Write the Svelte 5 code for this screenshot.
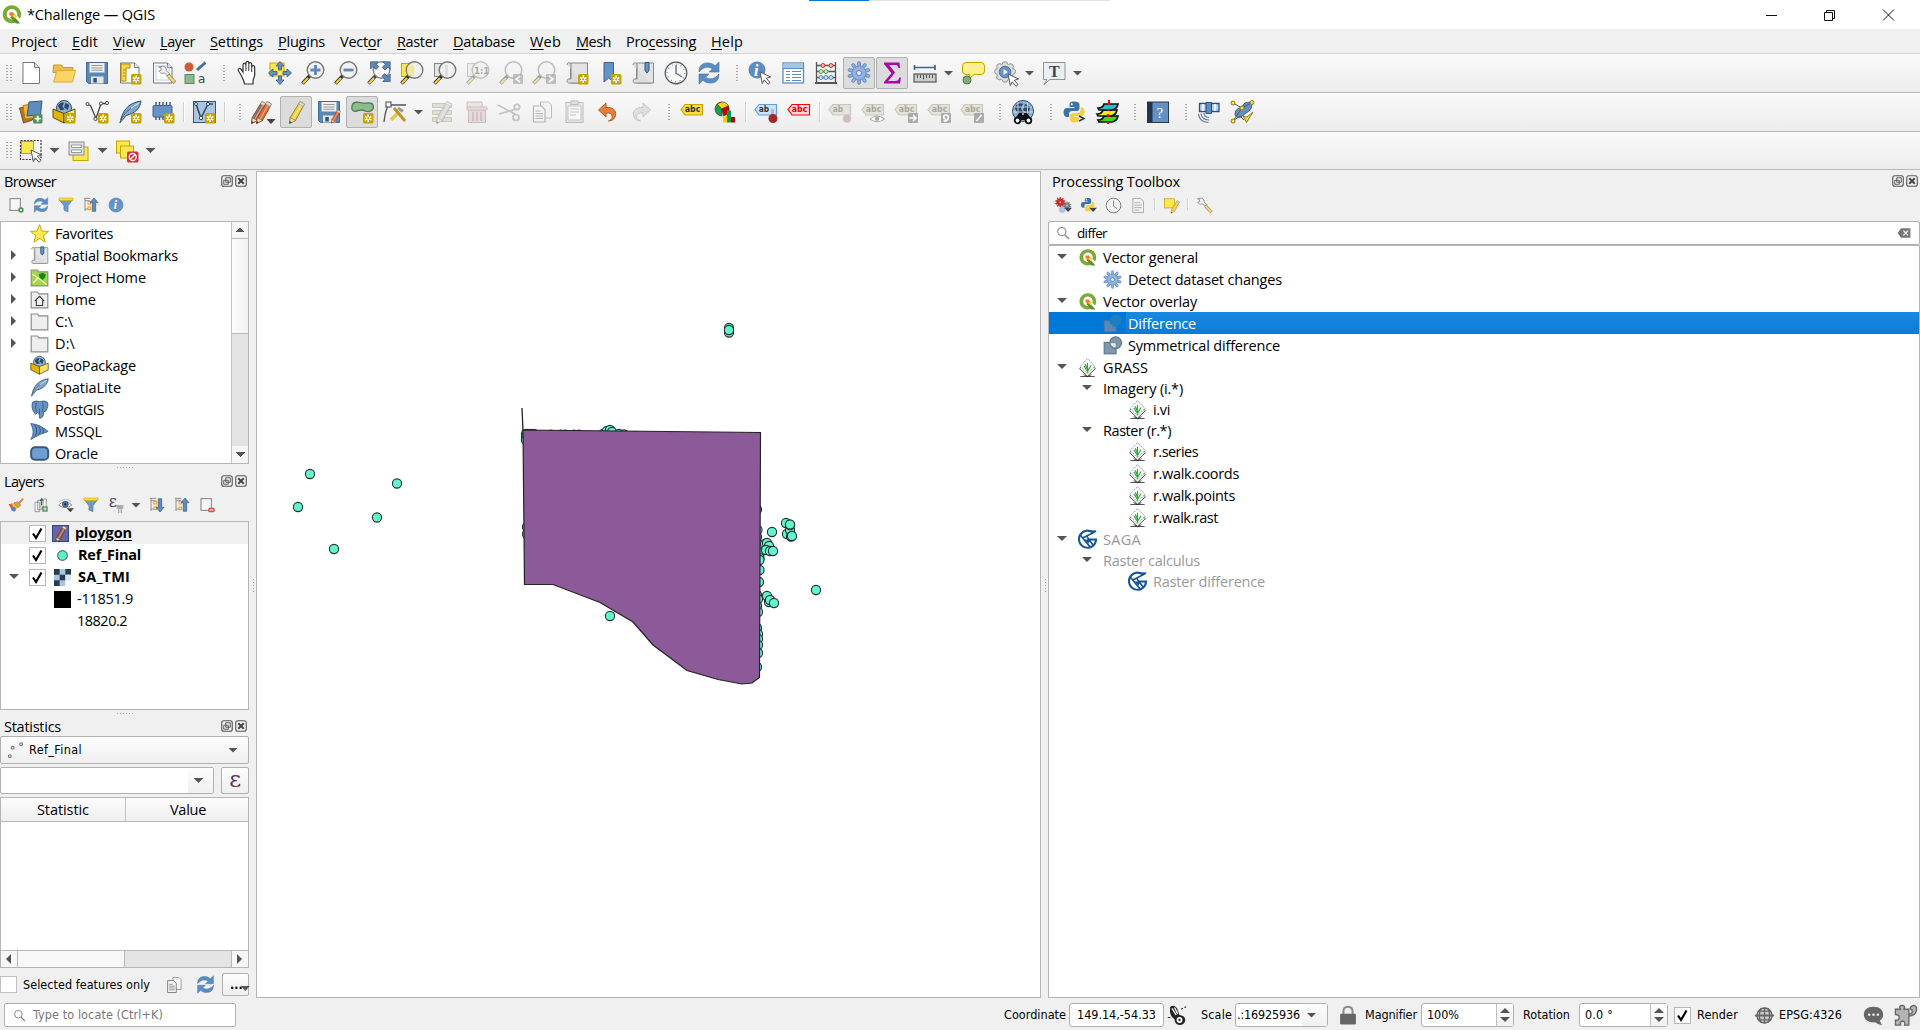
<script>
  // Spreads the letters of a label so that it takes exactly `width` pixels.
  function fit(node, width) {
    if (!width) return;
    const w = node.getBoundingClientRect().width;
    node.style.letterSpacing = (width - w) / node.textContent.length + 'px';
  }

  const menus = [
    ['Pro', 'j', 'ect', 46], ['', 'E', 'dit', 26], ['', 'V', 'iew', 32], ['', 'L', 'ayer', 35],
    ['', 'S', 'ettings', 53], ['', 'P', 'lugins', 47], ['Vect', 'o', 'r', 42], ['', 'R', 'aster', 41],
    ['', 'D', 'atabase', 62], ['', 'W', 'eb', 31], ['', 'M', 'esh', 35], ['Pro', 'c', 'essing', 70], ['', 'H', 'elp', 32]
  ];

  // Shared pieces of the icons
  const star = '<rect x="13" y="13" width="10.500" height="10.500" rx="1.500" fill="#c9a200"/><path d="M18.200 14.600v7.400M15 16.500l6.400 3.700M21.400 16.500L15 20.200" stroke="#fff" stroke-width="1.500"/><circle cx="18.200" cy="18.300" r="1.100" fill="#c9a200"/>';
  const plus = '<rect x="14" y="14" width="9.500" height="9.500" rx="1.500" fill="#4f8f5c"/><path d="M18.700 15.700v6M15.700 18.700h6" stroke="#fff" stroke-width="1.800"/>';
  const cursor = '<path d="M12 11l10.500 5-4.200 1.300 3.700 4.200-2 1.800-3.700-4.500-2 3.700z" fill="#fff" stroke="#555" stroke-width="1"/>';
  const lens = (x = '', g = '#f1f1ee') => `<path d="M9 14.500L1.500 22.500" stroke="#333" stroke-width="3.600"/><path d="M7 17L2 22.300" stroke="#f3c73b" stroke-width="2.200"/><circle cx="14.500" cy="9" r="8.300" fill="${g}" fill-opacity=".85" stroke="#777" stroke-width="1.400"/>${x}`;
  const page = '<path d="M2.500 2h14l4.500 4.500V22h-18.500z" fill="#fff" stroke="#777"/><path d="M16.500 2v4.500h4.500" fill="#eee" stroke="#777"/>';
  const disk = '<path d="M1.500 1.500h21v21h-19l-2-2z" fill="#5b87b5" stroke="#42688f"/><rect x="4.500" y="2" width="15" height="9.500" fill="#eee"/><path d="M6.500 4.500h11M6.500 7h11M6.500 9.300h11" stroke="#999" stroke-width="1.100"/><path d="M6 15.500h12.500v7H6z" fill="#e4e4e4"/><rect x="8.300" y="17" width="3.500" height="4.500" fill="#33527a"/>';
  const qgis = '<path d="M12.500 1.500a10.300 10.300 0 1 0 4.500 19.400l-3.200-3.400a6 6 0 1 1 4.400-4l3.500 3.400A10.400 10.400 0 0 0 12.500 1.500z" fill="#7aab34"/><path d="M13.500 12.500l8.500 9.700h-5l-6.500-7z" fill="#578f2e"/><path d="M9.500 9.500h4.200l2.800 3.300-2.500 2.700-4.500-3z" fill="#ee7b2f"/><path d="M13 13.500l3-2 2.500 3-2.500 2.200z" fill="#f3dc4a"/>';
  const gear = (f, s) => {
    let o = '';
    for (let i = 0; i < 10; i++) o += `<rect x="10.600" y=".8" width="2.800" height="6" rx="1" fill="${f}" stroke="${s}" stroke-width=".8" transform="rotate(${i * 36} 12 12)"/>`;
    return `${o}<circle cx="12" cy="12" r="7" fill="${f}" stroke="${s}" stroke-width=".8"/><circle cx="12" cy="12" r="6.400" fill="${f}"/><circle cx="12" cy="12" r="2.500" fill="#e8eef8" stroke="${s}"/>`;
  };
  const tag = (fill, line, ink, text = 'abc') => `<path d="M1 9.500L5 4.500h17.500v10.500H5z" fill="${fill}" stroke="${line}" stroke-width="1.200"/><text x="4.800" y="12.400" font-size="8.300" font-weight="bold" font-family="DejaVu Sans" textLength="${text.length * 5.200}" lengthAdjust="spacingAndGlyphs" fill="${ink}">${text}</text>`;
  const gtag = (t) => tag('#e4e3da', '#c9c7bc', '#aaa89c', t);
  const refresh = '<path d="M2 11C2 4 6 1.500 12 2c3 .3 4.500 1.500 6 2.800L22 1v10h-10l3.500-3.200C11 4.800 6 6 2 11z" fill="#5a8dc6" stroke="#44719f" stroke-width=".6"/><path d="M22 13c0 7-4 9.500-10 9-3-.3-4.500-1.500-6-2.800L2 23V13h10l-3.500 3.200C13 19.200 18 18 22 13z" fill="#5a8dc6" stroke="#44719f" stroke-width=".6"/>';
  const python = '<path d="M12 1.500c-4 0-4.500 1.500-4.500 3V7h5v1H5C2.500 8 1.500 10 1.500 12.500S3 17 5 17h2v-3c0-2 1.500-3 3-3h5c1.500 0 2.500-1.200 2.500-2.700V4.500c0-2-2-3-5.500-3z" fill="#3b75a8"/><path d="M12.500 22.500c4 0 4.500-1.500 4.500-3V17h-5v-1h7.500c2.500 0 3.300-2 3.300-4.200S21.500 7.500 19.500 7.500h-1V10c0 2-1.500 3-3 3h-4c-2 0-3.500 1.200-3.500 3v3.500c0 2 1.500 3 4.500 3z" fill="#f7cf46"/><circle cx="9.800" cy="4.300" r="1" fill="#fff"/>';
  const globe = (x, y, r) => `<circle cx="${x}" cy="${y}" r="${r}" fill="#8fb1d6" stroke="#33506f"/><path d="M${x - r * 0.8} ${y - r * 0.3}q${r * 0.3} ${-r * 0.6} ${r * 0.8} ${-r * 0.4}l-${r * 0.2} ${r * 0.5} ${r * 0.3} ${r * 0.4}-${r * 0.6} ${r * 0.1}zM${x + r * 0.2} ${y - r * 0.7}l${r * 0.5} ${r * 0.3}-${r * 0.2} ${r * 0.7}-${r * 0.5}-${r * 0.4}z" fill="#2f4a68"/>`;
  const feather = '<path d="M2 23C4 12 9 3 23 1c-1 7-5 12-15 14.500z" fill="#7ea6d0" stroke="#33506f"/><path d="M2 23C6 14 12 8 21 3" stroke="#e8f1fa" fill="none"/><path d="M2 23C5 15 9 11 13 8.500" stroke="#33506f" fill="none"/>';
  const pencil = (c, d) => `<path d="M16 1.500l4.500 2.500-9 16.500-6 3 .8-6z" fill="${c}" stroke="${d}" stroke-width=".9"/><path d="M16 1.500l4.500 2.500-1.300 2.500-4.600-2.600z" fill="#ddd" stroke="#999" stroke-width=".7"/><path d="M17 5.500L8.500 20" stroke="#fff" stroke-opacity=".45" stroke-width="1.300"/><path d="M6.300 17.500l5.200 3-6 3z" fill="#f1dfc0" stroke="${d}" stroke-width=".7"/><path d="M5.500 23.500l.4-2.500 1.700 1.400z" fill="#333"/>`;
  const wrench = '<path d="M2 2.500l3 1v3l-2.500 1C4.500 11 7.500 10.500 9 9.500l4 4 2.500-2.500-4-4C12 4 9 1 6.500 1.500z" fill="#eee" stroke="#777"/><path d="M12 13.500l2.500-2.500 8 8.500c0 2-1.500 3-3 2.500z" fill="#ecd684" stroke="#8d7a3f"/>';
  const sheet = '<path d="M6 2h11l4 4v16H6z" fill="#f4f4f4" stroke="#999" stroke-width="1.300"/><path d="M8.500 8h8M8.500 11.500h10M8.500 15h10M8.500 18.500h7" stroke="#999" stroke-width="1.200"/>';
  const copy = '<path d="M10.500 2h8l3 3v13h-11z" fill="#f4f4f4" stroke="#888"/><path d="M3.500 6h8l3.500 3.500V22H3.500z" fill="#f6f6f6" stroke="#777" stroke-width="1.200"/><path d="M5.500 11h5M5.500 13.500h7.500M5.500 16h7.500M5.500 18.500h7.500" stroke="#777"/>';
  const tree = (up) => `<path d="M3 2v19M3 5.500h7M3 18h7" stroke="#888" fill="none" stroke-width="1.400"/><path d="M1.500 2H11" stroke="#888" stroke-width="1.400"/><rect x="7.500" y="6.500" width="4" height="4" fill="#fff" stroke="#ef9a2e" stroke-width="1.500"/><rect x="7.500" y="15" width="4" height="4" fill="#fff" stroke="#ef9a2e" stroke-width="1.500"/><path d="${up ? 'M16.500 1.500l6 7h-3.500v13h-5v-13h-3.500z' : 'M16.500 22.500l6-7h-3.500v-13h-5v13h-3.500z'}" fill="#5c8cc0" stroke="#33567d"/>`;
  const funnel = '<path d="M2 4h20l-7 9v9l-6-2.500V13z" fill="#6f9bc8" stroke="#4a76a3"/><rect x="1.500" y="1.500" width="21" height="4" fill="#f7dc45" stroke="#c9a200" stroke-width=".8"/>';
  const folder = (x = '', f = '#eee') => `<path d="M1.500 2.500h8l1.500 2.500h11.500v17.500h-21z" fill="${f}" stroke="#8b8b8b" stroke-width="1.500"/>${x}`;
  const box = '<path d="M1 9l11 4.500v9.500L1 17.500z" fill="#e2b500" stroke="#4d4100" stroke-width=".9"/><path d="M23 9l-11 4.500v9.500l11-5.500z" fill="#f9e468" stroke="#4d4100" stroke-width=".9"/>';
  const bookmark = '<path d="M5.500 2h17v20h-17z" fill="#e4e4e4" stroke="#888"/><path d="M2 4c0-3 4-3 4 0v14H3.500c-2 0-1.500 4 0 4H20" fill="#ddd" stroke="#888"/>';
  const clock = '<circle cx="12" cy="12" r="10.800" fill="#f8f8f8" stroke="#555" stroke-width="1.200"/><circle cx="12" cy="12" r="8.800" fill="none" stroke="#6f9bc8" stroke-width="1.300" stroke-dasharray="1 3.600"/><path d="M12 4v8l6 4" stroke="#777" stroke-width="1.500" fill="none"/>';
  const info = '<circle cx="12" cy="12" r="10.500" fill="#6693c5" stroke="#4f7cad"/><text x="8.700" y="18.500" font-size="18" font-style="italic" font-weight="bold" font-family="Liberation Serif" fill="#fff">i</text>';
  const saga = '<path d="M19.500 3.800A10.800 10.800 0 1 0 22.800 12H12" fill="none" stroke="#16559a" stroke-width="2.600"/><path d="M22.500 1.500L7.500 9.500M3 6.500L15 21M6.500 9.500L11 8l8 11" fill="none" stroke="#16559a" stroke-width="2"/><path d="M8 12h9l-4 5z" fill="#16559a"/><path d="M15 1.500h8" stroke="#16559a" stroke-width="2"/>';
  const grass = '<path d="M12 4L22 13.500 12 23 2 13.500z" fill="#fff" stroke="#222"/><path d="M12 1l9.500 9.500L12 20 2.500 10.500z" fill="#fff" stroke="#777" stroke-width="1" stroke-dasharray="2 1"/><path d="M7 21l5 2.500 5-2.500M3 23.400h18" stroke="#222" fill="none"/><path d="M12 18.500V6M12 17L7.500 10M12 17l4.500-7.500M12 14l-3-6" stroke="#36a63c" stroke-width="1.500" fill="none"/>';
  const badge = (p) => `<rect x="14" y="13" width="10" height="10" rx="1" fill="#aaa"/><path d="${p}" stroke="#fff" stroke-width="1.600" fill="none"/>`;

  const icons = {
    qgis, python, feather, saga, grass, funnel, refresh, clock, info, copy, gear: gear('#8fb2e4', '#5c83b8'),
    new: '<path d="M4 1.500h11.500l5 5V22.500H4z" fill="#fff" stroke="#777"/><path d="M15.500 1.500v5h5" fill="#ddd" stroke="#777"/>',
    open: '<path d="M1.500 4h8l1.500 2.500h10v5h-20z" fill="#e8bd4a" stroke="#c99a2a"/><path d="M5 9.500h18.500L20.500 21H1.500z" fill="#fcd462" stroke="#dcab35"/>',
    save: disk,
    layout: page + '<path d="M3 3h9v4H8v13H3z" fill="#f6d650" stroke="#b28d00"/><path d="M5 9h2M5 12h2M5 15h2" stroke="#b28d00"/>' + star,
    manager: page + '<rect x="5" y="5" width="13" height="14" fill="none" stroke="#b8c9ef"/><g transform="translate(6 4) scale(.82)">' + wrench + '</g>',
    style: '<circle cx="5" cy="6" r="4.500" fill="#cf5a33"/><path d="M13 9L21.500 1.500" stroke="#45709c" stroke-width="3"/><rect x="1" y="13.500" width="9" height="9" fill="#8fb78f" stroke="#5b8a5c"/><text x="14" y="22" font-size="12" font-family="DejaVu Sans" fill="#444">a</text>',
    pan: '<path d="M6 14L3.500 10c-1.200-2 1.200-3.600 2.700-1.600L8 11V4c0-2.200 2.900-2.200 2.900 0V2c0-2.200 2.900-2.200 2.900 0v1c.2-2 2.900-1.800 2.900.3V6c.3-2 3-1.800 3 .3V14c0 2.500-1.700 4-1.700 6v3H9.500c-.4-4-2-5.500-3.500-9z" fill="#fff" stroke="#333" stroke-width="1.200"/><path d="M10.900 4v6M13.800 3v7M16.700 6v5" stroke="#333" stroke-width="1"/>',
    pansel: '<rect x="2" y="2" width="14" height="13" fill="#fbe84f" stroke="#c9a200"/><path d="M12 .5l4 4.500h-2.500v4h-3V5H8zM12 23.500l4-4.500h-2.500v-4h-3v4H8zM.5 12L5 8v2.500h4v3H5V16zM23.500 12L19 8v2.500h-4v3h4V16z" fill="#6592c3" stroke="#33567d" stroke-width=".8"/>',
    zin: lens('<path d="M14.500 4v10M9.500 9h10" stroke="#5b87b9" stroke-width="2.800"/>'),
    zout: lens('<path d="M9.500 9h10" stroke="#5b87b9" stroke-width="2.800"/>'),
    zfull: '<g opacity=".9">' + lens('', '#fafafa') + '</g><path d="M3.500.800h7.500l-2.300 2 3 3-2.700 2.700-3-3-2.500 2.500zM23.200.800v7.500l-2.200-2.300-3 3-2.700-2.700 3-3-2.500-2.500zM23.200 20.500h-7.500l2.300-2.200-3-3 2.700-2.700 3 3 2.500-2.500z" fill="#5b87b9" stroke="#33567d" stroke-width=".7"/>',
    zsel: '<rect x="1.500" y="2.500" width="11" height="13" fill="#fbe84f" stroke="#c9a200"/>' + lens('<path d="M8 4.500h6.500v10.500h-6q-3-5-.5-10.500z" fill="#f0e68c" fill-opacity=".7"/>'),
    zlay: '<rect x="1.500" y="2.500" width="11" height="13" fill="#e4e4e4" stroke="#888"/>' + lens('<path d="M14 4v11" stroke="#ccc"/>'),
    znat: '<g opacity=".4"><rect x="1.500" y="2.500" width="11" height="13" fill="#e4e4e4" stroke="#888"/>' + lens('<text x="8" y="12.500" font-size="9.500" font-weight="bold" font-family="DejaVu Sans Condensed" fill="#333">1:1</text>') + '</g>',
    zprev: '<g opacity=".45">' + lens() + '</g><g opacity=".7">' + badge('M21 15l-4 3 4 3') + '</g>',
    znext: '<g opacity=".45">' + lens() + '</g><g opacity=".7">' + badge('M17 15l4 3-4 3') + '</g>',
    mapview: bookmark + star,
    bmnew: '<path d="M6 1.500h9.500V21L10.700 17 6 21z" fill="#6693c5" stroke="#3b638d"/>' + star,
    bmshow: bookmark + '<path d="M14 1.500h4v8l-2 2.500-2-2.500z" fill="#6693c5" stroke="#33567d"/>',
    identify: '<circle cx="9" cy="9" r="8.500" fill="#5f8cbf"/><text x="6" y="15" font-size="16" font-style="italic" font-weight="bold" font-family="Liberation Serif" fill="#fff">i</text>' + cursor,
    table: '<rect x="2" y="2" width="20.500" height="20" fill="#fff" stroke="#5c8cc0" stroke-width="1.300"/><path d="M2.500 5h19.500" stroke="#a9c5e4" stroke-width="5"/><path d="M2 7.500h20.500M5 10.500h4M11 10.500h9M5 13.500h4M11 13.500h9M5 16.500h4M11 16.500h9M5 19.500h4M11 19.500h9" stroke="#5c8cc0" stroke-width="1.200"/>',
    abacus: '<path d="M2.500 1v20M21.500 1v20M2.500 4.500h19M2.500 10.500h19M2.500 16.500h19" stroke="#555" stroke-width="1.300"/><path d="M1 22h22" stroke="#555" stroke-width="2"/><g fill="#f7b5a8" stroke="#c33"><circle cx="9" cy="4.500" r="2"/><circle cx="17" cy="4.500" r="2"/></g><g fill="#cfeac4" stroke="#5a9e50"><circle cx="7" cy="10.500" r="2"/><circle cx="12" cy="10.500" r="2"/></g><g fill="#cfe2f5" stroke="#4f86bd"><circle cx="7" cy="16.500" r="2"/><circle cx="12" cy="16.500" r="2"/><circle cx="17" cy="16.500" r="2"/></g>',
    sigma: '<path d="M4 1.500h15.500l.5 5.500h-1.500c-.6-2.500-1.500-3-4-3H9l6 7.500-6.800 8.500h7c2.500 0 3.500-1 4.300-3.500H21L20 22.500H4V21l7.500-8.800L4 3z" fill="#a808a8"/>',
    ruler: '<path d="M1.500 6.500h20.500M1.500 4v5M22 4v5" stroke="#3f648d" stroke-width="1.700"/><rect x="1" y="13" width="22" height="8" fill="#ccc" stroke="#555" stroke-width="1.200"/><path d="M4.500 13.500v3.500M7.500 13.500v3.500M10.500 13.500v5M13.500 13.500v3.500M16.500 13.500v3.500M19.500 13.500v3.500" stroke="#555"/>',
    tip: '<path d="M5 1.500h15q3.500 0 3.500 3.500v5q0 3.500-3.500 3.500H13L8 18l1-4.500H5Q1.500 13.500 1.500 10V5q0-3.500 3.500-3.500z" fill="#fbf08e" stroke="#c9a200"/><circle cx="6" cy="19" r="4" fill="#7eae7e" stroke="#4c7a4c"/>',
    action: '<g fill="#ddd" stroke="#888" stroke-width=".9"><circle cx="11" cy="3.500" r="2.800"/><circle cx="16.500" cy="5.500" r="2.800"/><circle cx="18.800" cy="10.500" r="2.800"/><circle cx="16.500" cy="16" r="2.800"/><circle cx="11" cy="18.500" r="2.800"/><circle cx="5.500" cy="16" r="2.800"/><circle cx="3.500" cy="10.500" r="2.800"/><circle cx="5.500" cy="5.500" r="2.800"/></g><circle cx="11" cy="11" r="8" fill="#ddd"/><circle cx="11" cy="11" r="5.800" fill="#6693c5" stroke="#4a76a3"/><path d="M9.500 8v6l4.500-3z" fill="#fff"/><g transform="translate(2 2)">' + cursor + '</g>',
    note: '<path d="M1.500 1.500h21.500v17H8L2 23.500l3-5H1.500z" fill="#e8f0f4" stroke="#8b9499"/><text x="7" y="15.500" font-size="16" font-weight="bold" font-family="Liberation Serif" fill="#444">T</text>',
    source: '<path d="M.5 8l11-2 2 14-9 3z" fill="#b9722c" stroke="#7d4d1d"/><path d="M4 5.500l12-2 1 14-11 1.500z" fill="#f1b83a" stroke="#a87b18"/><path d="M10 2l13-1-1.500 13.500L8 16z" fill="#5c8cc0" stroke="#33567d"/>' + plus,
    gpkg: globe(12, 8, 7.5) + box + star,
    geopackage: globe(12, 8, 7.5) + box,
    shp: '<path d="M2.500 4.500l3 1 5.500 13 5-15h6" fill="none" stroke="#444" stroke-width="1.300"/><g fill="#fff" stroke="#444"><circle cx="2.500" cy="4" r="1.600"/><circle cx="10.500" cy="19" r="1.600"/><circle cx="16" cy="3.500" r="1.600"/><circle cx="22" cy="3" r="1.600"/></g>' + star,
    splite: feather + star,
    memory: '<path d="M5 2v18M8.500 2v18M12 2v18M15.500 2v18M19 2v18" stroke="#33567d" stroke-width="1.400"/><rect x="2" y="5.500" width="19" height="11.500" rx="1" fill="#6693c5" stroke="#3b638d"/>' + star,
    virtual: '<rect x="1.500" y="1.500" width="22" height="21" fill="#aac4e2" stroke="#33567d"/><path d="M4 4l5 14 7-14h5" fill="none" stroke="#33475c" stroke-width="1.500"/><g fill="#fff" stroke="#33475c"><circle cx="4" cy="4" r="1.500"/><circle cx="9" cy="18" r="1.700"/><circle cx="16" cy="4" r="1.500"/></g>' + star,
    pencils: '<g transform="translate(-5 0)">' + pencil('#9c6a58', '#6e4a3c') + '</g>' + pencil('#de6a33', '#9c4418') + '<path d="M15.500 19h9l-4.500 5z" fill="#444"/>',
    pencil: pencil('#ecd445', '#8d7a22'),
    saveedit: disk + '<g transform="translate(11 9) scale(.6)">' + pencil('#de6a33', '#9c4418') + '</g>',
    addpoly: '<path d="M2 6c1-5 7-4 10-3 4 1 9-2 11 2 2 5-4 8-8 6-3-2-5-1-8 0C3 12 1 10 2 6z" fill="#8dbb8c" stroke="#4f7d52" stroke-width="1.300"/>' + star,
    vertex: '<path d="M1 22C2 13 3 8 6 5h17" fill="none" stroke="#555" stroke-width="1.300"/><rect x="3" y="2" width="5" height="5" fill="#fff" stroke="#444"/><path d="M8 20l8-8" stroke="#e6c94a" stroke-width="3.500"/><path d="M11 8l11 13" stroke="#c28f22" stroke-width="2.800"/><path d="M15 8l5 3.500" stroke="#999" stroke-width="3"/>',
    multiedit: '<g opacity=".45"><path d="M1.500 3.500h19v4h-19zM1.500 10.500h19v4h-19zM1.500 17.500h19v4h-19z" fill="#c9c7a8" stroke="#97956f"/>' + pencil('#bbb', '#777') + '</g>',
    trash: '<g opacity=".38" fill="#d8b4b4" stroke="#8d6a6a"><path d="M3 2h15v6H3z" fill="#d5d2bd"/><path d="M4.500 10h17v12.500h-17z"/><path d="M3 7h20v3H3z"/><path d="M9 12v9M13 12v9M17 12v9" stroke-width="1.500"/></g>',
    cut: '<g opacity=".45" fill="none" stroke="#888" stroke-width="1.700"><path d="M1 5l17 9M2 14L20 9"/><circle cx="20" cy="7" r="2.700"/><circle cx="19" cy="17.500" r="3"/></g>',
    copyoff: '<g opacity=".5">' + copy + '</g>',
    paste: '<g opacity=".5"><rect x="3" y="2.500" width="17" height="20" fill="#ddd" stroke="#888"/><rect x="8" y="1" width="7" height="3.500" fill="#ccc" stroke="#888"/><path d="M5 6h13v14H5z" fill="#fff" stroke="#999"/><path d="M7 9h9M7 12h9M7 15h6" stroke="#999"/></g>',
    undo: '<path d="M2.500 10L10 3v4.500c7-.5 10.500 3 9.500 8-.7 3.500-3.500 5.500-7 5.500 3.500-1.500 4-3 3.700-5C15.800 13.500 13.500 12.500 10 13v4z" fill="#e5803c" stroke="#b9571d"/>',
    redo: '<path d="M21.500 10L14 3v4.500c-7-.5-10.500 3-9.500 8 .7 3.500 3.500 5.500 7 5.500-3.500-1.500-4-3-3.700-5C8.200 13.500 10.500 12.500 14 13v4z" fill="#dcdfdc" stroke="#c3c8c3"/>',
    label: tag('#f7dc45', '#c9a200', '#333'),
    diagram: '<path d="M9 2a7 7 0 1 0 0 14z" fill="#17a04a" stroke="#222" stroke-width=".6"/><path d="M9 8.500V2l6 3z" fill="#fc0" stroke="#222" stroke-width=".6"/><path d="M9 2a7 7 0 0 1 6.500 4L9 9 4 4z" fill="#fbd019" stroke="#222" stroke-width=".5"/><path d="M9 9l6.500-3c2 5-1 9-5 9.800z" fill="#c00" stroke="#222" stroke-width=".6"/><path d="M10 16h4v6.500h-4z" fill="#fc0"/><path d="M14 10.500h4v12h-4z" fill="#0b9a45"/><path d="M18 17h4v5.500h-4z" fill="#b00"/>',
    pin: tag('#cfe4fa', '#5c9de8', '#333', 'ab') + '<path d="M18.500 9v8" stroke="#bbb" stroke-width="3"/><circle cx="19" cy="18.500" r="4.500" fill="#a3272b"/>',
    tagred: tag('#ffd9d9', '#f00', '#d00'),
    tagpin: gtag('ab') + '<path d="M18 9v8" stroke="#e4e4e4" stroke-width="3"/><circle cx="19" cy="18.500" r="4.300" fill="#cdbfc0"/>',
    tageye: gtag('abc') + '<path d="M9 19q7-6 14.500 0-7.500 5.500-14.500 0z" fill="#fff" stroke="#aaa"/><circle cx="16" cy="18.700" r="2.200" fill="#aaa"/>',
    tagmove: gtag('abc') + badge('M15.500 18h6M19 15l3 3-3 3'),
    tagrot: gtag('abc') + badge('M16.500 21c6 0 6-6 2.500-6-3 0-3 4 0 4'),
    tagedit: gtag('abc') + badge('M16.500 21l5-6'),
    globesearch: globe(12, 11, 10.5) + '<path d="M3 7h18M2 12h20M7 2.500v17M16.500 2.500v17" stroke="#dce9f6" stroke-width=".8"/><path d="M8 13h3v2h2v-2h3l5 7H3z" fill="#111"/><circle cx="6.500" cy="20.500" r="2.800" fill="#fff" stroke="#111" stroke-width="1.800"/><circle cx="17.500" cy="20.500" r="2.800" fill="#fff" stroke="#111" stroke-width="1.800"/>',
    pyconsole: python + '<path d="M17 16l5 2.500-5 2.500" fill="none" stroke="#333" stroke-width="1.500"/>',
    layers: '<g stroke="#111" stroke-width="1.700"><path d="M3 20q5 0 6-4h14q-1 5-6 6H4z" fill="#3fd61b"/><path d="M2 14q5 0 6-4h14q-1 5-6 6H3z" fill="#f4ee16"/><path d="M3 8q5 0 6-4h14q-1 5-6 6H4z" fill="#19c4d8"/></g><path d="M14 0v5M13.500 9v2M13 14v3M13 21v3" stroke="#f00" stroke-width="2"/>',
    help: '<rect x="1.500" y="2" width="21" height="20.500" fill="#6391c4" stroke="#283b52"/><rect x="1.500" y="2" width="5" height="20.500" fill="#26364a"/><text x="10.500" y="18" font-size="15" font-family="Liberation Serif" fill="#fff">?</text>',
    satellite: '<path d="M2.500 3.500h19.500v8H2.500z" fill="#b5d4f2" stroke="#2f4f77" stroke-width="1.300"/><path d="M9 2.500h5.500v11H9z" fill="#5c8cc0" stroke="#2f4f77"/><path d="M6 4v7M18 4v7" stroke="#fff" stroke-width="1.500"/><path d="M1.500 14q1 8 10 8.500M4 13.500q.5 6 8 6.500M7 13q0 4 5 4.500" fill="none" stroke="#5f7ba0" stroke-width="1.200"/>',
    topo: '<path d="M5 14q0-5 6-6.500L15 3q6-2 7 1 0 6-6 9l-5 4q-6 1-6-3z" fill="#6391c4" stroke="#3d5c81"/><path d="M3 3l9 5 10-5.500M12 8L3 21M3 21l7-5 4 4" stroke="#555" fill="none"/><g fill="#f7e04a" stroke="#8d7a22"><circle cx="3" cy="3" r="2"/><circle cx="22" cy="2.500" r="2"/><circle cx="3" cy="21" r="2"/><circle cx="12" cy="8" r="2"/></g><path d="M13 16l3.500 6.500L23 12l-6 5z" fill="#f7dc45" stroke="#8d7a22"/>',
    selrect: '<rect x="1.500" y="1.500" width="20.500" height="19" fill="none" stroke="#333" stroke-width="1.200" stroke-dasharray="2 1.300"/><rect x="2.500" y="2.500" width="12" height="12" fill="#fbe84f" stroke="#c9a200"/>' + cursor,
    selform: '<rect x="6" y="8" width="15" height="13.500" fill="#fbe84f" stroke="#c9a200"/><rect x="2" y="3" width="15" height="13" fill="#dde1e6" stroke="#888c92"/><path d="M4.500 6h10v2.500h-10zM4.500 11h10v2.500h-10z" fill="#fff" stroke="#999"/>',
    desel: '<rect x="1.500" y="2" width="13" height="12" fill="#fbe84f" stroke="#c9a200"/><rect x="5.500" y="7" width="13" height="12" fill="#fbe84f" stroke="#c9a200"/><rect x="12" y="12.500" width="11.500" height="11" rx="1.500" fill="#d8303c"/><circle cx="17.700" cy="18" r="3.500" fill="none" stroke="#fff" stroke-width="1.300"/><path d="M15 20.500l5.500-5" stroke="#fff" stroke-width="1.300"/>',
    add: '<rect x="3" y="2.500" width="15.500" height="17.500" fill="#f6f6f6" stroke="#777" stroke-width="1.400"/><circle cx="19.500" cy="19.500" r="4" fill="#4f8f5c"/><circle cx="19.500" cy="19.500" r="1.500" fill="#fff"/>',
    collapse: tree(true), expand: tree(false),
    fav: '<path d="M12 .8l3 8.200 8.500.3-6.700 5.300 2.300 8.400L12 18.200 4.900 23l2.300-8.400L.5 9.300 9 9z" fill="#fcec4f" stroke="#c9a200" stroke-width="1.200"/>',
    bookmarks: bookmark + '<path d="M13.500 1h4v8l-2 2.500-2-2.500z" fill="#6693c5" stroke="#33567d"/>',
    projhome: folder('<path d="M3 8l8 5 10 8M4 19l6-6" stroke="#f4f9df" stroke-width="1.500" fill="none"/><path d="M11 8l5-2 4 2-1 4-3 3-4-3z" fill="#128a12"/>', '#a3d64e'),
    home: folder('<path d="M6 14l6-6 6 6M8 13v6.500h8V13" fill="none" stroke="#333" stroke-width="1.300"/>'),
    folder: folder(),
    postgis: '<path d="M3 3q5-3 9-1 6-2 10 1 2 4-2 11l-3 1v4q-2 5-5 4l-.5-6-2-1-2.500 2Q1 12 3 3z" fill="#6693c5" stroke="#33567d"/><path d="M8 3q-2 6 0 12M16 3q2 6-1 12M12 11v8" stroke="#33567d" fill="none"/>',
    mssql: '<path d="M1 2q12 1 22 10Q12 15 1 22q6-9 0-20z" fill="#6693c5" stroke="#33567d"/><path d="M6 3.500q5 8 0 15M11 5.500q4 6 0 10.500M16 8q2 3 0 6" fill="none" stroke="#24405f"/>',
    oracle: '<rect x="1.500" y="4" width="21.500" height="16" rx="5" fill="#6f9fd0" stroke="#3a5877" stroke-width="2.500"/>',
    broom: '<path d="M1 11l9-2.500 6 6-6 6.500-4-1z" fill="#f6c23b"/><path d="M1 11l4-1 5 8-4 1z" fill="#e05252"/><path d="M5 16l6-1 1 5-3 2-4-2z" fill="#4d86d8"/><path d="M9 9l6-2 4 5-4 4z" fill="#dba24f" stroke="#a8742f"/><path d="M16 10l6.500-7.500" stroke="#c98f45" stroke-width="3.200"/>',
    group: '<path d="M3 8h7v14H3zM7 5h8v14H7zM12 3h8v14h-8z" fill="#f4f4f4" stroke="#777"/><path d="M13 12V3M10.500 6L13 2.500 15.500 6" stroke="#33567d" stroke-width="1.500" fill="none"/><rect x="14" y="14" width="8" height="8" fill="#4f8f5c"/><path d="M18 15.500v5M15.500 18h5" stroke="#fff" stroke-width="1.300"/>',
    eye: '<path d="M1 12Q10 2 21 12 11 20 1 12z" fill="#fff" stroke="#888" stroke-width="1.300"/><circle cx="11" cy="11" r="4.500" fill="#4f7cad" stroke="#24405f"/><circle cx="11" cy="11" r="1.500" fill="#111"/><path d="M2 7q9-7 18 0" fill="none" stroke="#aaa"/><path d="M13 17h11l-5.500 6z" fill="#444"/>',
    expr: '<text x="1" y="15" font-size="24" font-family="DejaVu Serif" fill="#5c3566">ε</text><path d="M13 12h10v5l-2 1v6h-2v-6h-2v6h-2v-6l-2-1z" fill="#aaa"/>',
    epsilon: '<text x="4" y="20" font-size="29" font-family="DejaVu Serif" fill="#5c3566">ε</text>',
    remove: '<rect x="3" y="2.500" width="15.500" height="17.500" fill="#f6f6f6" stroke="#777" stroke-width="1.400"/><rect x="14" y="16" width="9.500" height="7" rx="2" fill="#e04848"/><path d="M16 19.500h5.500" stroke="#fff" stroke-width="1.600"/>',
    polylayer: '<rect x=".7" y=".7" width="22.600" height="22.600" fill="#6a62b0" stroke="#2c4a78" stroke-width="1.400"/>' + pencil('#a4643c', '#5a3a2a'),
    pointlayer: '<circle cx="12" cy="12" r="6.900" fill="#5ff0cb" stroke="#333" stroke-width="1.200"/>',
    raster: '<path d="M0 0h24v24H0z" fill="#a9c5e4"/><path d="M0 0h8v8H0zM16 0h8v8h-8zM8 8h8v8H8zM0 16h8v8H0z" fill="#2b3b4e"/><path d="M16 8h8v8h-8z" fill="#d8e6f4"/><path d="M16 16h8v8h-8z" fill="#fff"/>',
    black: '<path d="M0 0h24v24H0z" fill="#000"/>',
    blank: '',
    diff: '<path d="M1.500 8.500h7a8 8 0 0 0 8 7.500v6.500h-15z" fill="#5b87b5" stroke="#4b77a5"/><circle cx="16" cy="8" r="7.500" fill="#1c7fc2"/>',
    symdiff: '<rect x="1.500" y="8" width="15" height="14.500" fill="#7c98ac" stroke="#5c7688" stroke-width="1.400"/><circle cx="16" cy="8.500" r="7.500" fill="#7c98ac" stroke="#5c7688" stroke-width="1.400"/><path d="M9 8.500h7.500V15q-7-.5-7.500-6.500z" fill="#e8eddf" stroke="#5c7688" stroke-width=".8"/>',
    models: '<g transform="scale(.62)">' + gear('#d8262c', '#a81015') + '</g><g transform="translate(11 6) scale(.5)">' + gear('#888', '#555') + '</g><g transform="translate(5 13) scale(.42)">' + gear('#a9c5f0', '#7a9ad0') + '</g><path d="M13 15h11l-5.500 6z" fill="#444"/>',
    scripts: '<g transform="scale(.9)">' + python + '</g><path d="M13 15h11l-5.500 6z" fill="#444"/>',
    history: '<circle cx="12" cy="12" r="10.300" fill="#f4f4f4" stroke="#777" stroke-width="1.400"/><path d="M12 5v8l5 3.500" fill="none" stroke="#888" stroke-width="1.400"/>',
    results: '<g opacity=".85" transform="translate(-2)">' + sheet + '</g>',
    inplace: '<rect x="2" y="2.500" width="14" height="13" fill="#fbe84f" stroke="#c9a200"/><g transform="translate(7 4) scale(.8)">' + pencil('#ecc945', '#a8862a') + '</g>',
    wrench,
    search: '<circle cx="10" cy="9.500" r="7" fill="none" stroke="#888" stroke-width="1.800"/><path d="M15 15l7 7" stroke="#888" stroke-width="2.400"/>',
    clear: '<path d="M7 4h16v16H7L1 12z" fill="#777"/><path d="M11 8l8 8M19 8l-8 8" stroke="#fff" stroke-width="2.200"/>',
    float: '<rect x="1.500" y="1.500" width="21" height="21" rx="4" fill="none" stroke="#555" stroke-width="2.200"/><path d="M9.500 5.500h9v9h-9zM5.500 10.500h9v8h-9z" fill="#f4f4f4" stroke="#555" stroke-width="1.900"/>',
    close: '<rect x="1.500" y="1.500" width="21" height="21" rx="4" fill="none" stroke="#555" stroke-width="2.200"/><path d="M6.500 6.500l11 11M17.500 6.500l-11 11" stroke="#444" stroke-width="4"/>',
    points: '<g fill="#ddd" stroke="#777" stroke-width="1.500"><circle cx="4" cy="20" r="2"/><circle cx="8" cy="8" r="2"/><circle cx="20" cy="3" r="2"/></g>',
    mouse: '<path d="M4 2q5-3 8 2l3 8q7 1 7 6-1 6-7 6-6-1-6-7Q2 12 4 2z" fill="#222"/><path d="M6 4l5 8M9 3l4 8" stroke="#fff" stroke-width="1.600"/><circle cx="15" cy="18" r="3.500" fill="#fff"/><circle cx="15" cy="18" r="1.400" fill="#222"/><path d="M17 5l2-1M21 3l2-1M1 15h3" stroke="#222" stroke-width="1.400"/>',
    lock: '<path d="M6.500 11V8q0-6 5.500-6t5.500 6v3" fill="none" stroke="#888" stroke-width="2.400"/><rect x="2.500" y="10.500" width="19" height="13" rx="1.500" fill="#666"/>',
    crs: '<circle cx="12" cy="12" r="9.500" fill="#ccc" stroke="#666" stroke-width="1.800"/><path d="M3.500 6.500h17M3.500 17.500h17M12 2v20M7.500 3q-4 9 0 18M16.500 3q4 9 0 18" fill="none" stroke="#666" stroke-width="1.700"/><path d="M0 12h24" stroke="#666" stroke-width="2.500"/>',
    bubble: '<path d="M12 2c7 0 11 4 11 9 0 3-1.500 5.500-4 7l3 5q-5-.5-8-3.200C6 20.500 1 16.500 1 11S5 2 12 2z" fill="#666"/><g fill="#fff"><circle cx="7" cy="11" r="1.400"/><circle cx="12" cy="11" r="1.400"/><circle cx="17" cy="11" r="1.400"/></g>',
    puzzle: '<path d="M1.500 5.500h5q-1.500-4 2-4t2 4h5v5q4 0 3.500-4-2 0-2-2.500 1-2.500 4-2.500 3 1 2.500 5-1 6-8 6v9.500h-4.500q1-4-2-4t-2 4h-5.500v-5q4 0 4-3t-4-3z" fill="#b4b4b4" stroke="#666" stroke-width="1.400"/>'
  };

  // Toolbar items: "|" grip, "/" separator, "+" after a name pressed, ",v" after a name drop-down arrow
  const bars = [
    '| new open save layout manager style | pan pansel zin zout zfull zsel zlay znat zprev znext mapview bmnew bmshow clock refresh | identify table abacus gear+ sigma+ ruler,v tip action,v note,v',
    '| source gpkg shp splite memory / virtual / | pencils pencil+ saveedit addpoly+ vertex,v multiedit trash cut copyoff paste undo redo | label diagram / pin tagred / tagpin tageye tagmove tagrot tagedit | globesearch | pyconsole layers | help | satellite topo',
    '| selrect,v selform,v desel,v'
  ].map((s) => s.split(' '));

  const browser = [
    ['fav', 'Favorites', 58], ['bookmarks', 'Spatial Bookmarks', 123, 1], ['projhome', 'Project Home', 91, 1],
    ['home', 'Home', 41, 1], ['folder', 'C:\\', 18, 1], ['folder', 'D:\\', 20, 1], ['geopackage', 'GeoPackage', 81],
    ['feather', 'SpatiaLite', 66], ['postgis', 'PostGIS', 49], ['mssql', 'MSSQL', 47], ['oracle', 'Oracle', 43]
  ];

  const layers = [
    { icon: 'polylayer', name: 'ploygon', w: 57, cls: 'current' },
    { icon: 'pointlayer', name: 'Ref_Final', w: 63, cls: 'sub' },
    { icon: 'raster', name: 'SA_TMI', w: 52, cls: 'sub', open: true }
  ];

  // depth, icon, label, width, expandable, class
  const algs = [
    [0, 'qgis', 'Vector general', 95, 1, ''], [1, 'gear', 'Detect dataset changes', 154, 0, ''],
    [0, 'qgis', 'Vector overlay', 94, 1, ''], [1, 'diff', 'Difference', 68, 0, 'selected'],
    [1, 'symdiff', 'Symmetrical difference', 152, 0, ''], [0, 'grass', 'GRASS', 45, 1, ''],
    [1, '', 'Imagery (i.*)', 80, 1, 'short'], [2, 'grass', 'i.vi', 17, 0, ''], [1, '', 'Raster (r.*)', 68, 1, 'short'],
    [2, 'grass', 'r.series', 45, 0, ''], [2, 'grass', 'r.walk.coords', 86, 0, ''], [2, 'grass', 'r.walk.points', 82, 0, ''],
    [2, 'grass', 'r.walk.rast', 65, 0, ''], [0, 'saga', 'SAGA', 38, 1, 'off'], [1, '', 'Raster calculus', 97, 1, 'short off'],
    [2, 'saga', 'Raster difference', 112, 0, 'off']
  ];

  const under = [
    [526, 434], [526, 437], [526, 440], [527, 527], [527, 534], [528, 434], [531, 434], [534, 434], [551, 434.700], [561, 434.700], [565, 434.700], [574, 434.700], [579, 434.700],
    [603, 434], [607, 431], [610, 430], [612, 432], [619, 434], [624, 434.500], [635, 436],
    [757, 509.500], [757.500, 530], [757, 537], [757, 543], [759, 549], [760, 553], [759.500, 558], [759.500, 560], [759.500, 570], [759, 582], [757, 595], [758, 599], [757, 606],
    [758, 612], [757, 628], [758, 634], [758, 639], [758, 645], [758, 653], [757, 667]
  ];
  const over = [
    [310, 474], [397, 483.500], [298, 507], [377, 517.500], [334, 549], [729, 328], [729, 332.500], [729, 330], [610, 616], [816, 590],
    [786, 523], [787, 534], [790, 530], [790, 525], [791, 536.500], [790, 524.500], [792, 536], [772, 532],
    [765, 544], [767, 543], [769, 546], [766, 550], [770, 551], [773, 551], [767, 596], [769, 602], [770, 600], [774, 603]
  ];
</script>

{#snippet ic(name, size)}
  <svg class="ic" width={size} height={size} viewBox="0 0 24 24">{@html icons[name]}</svg>
{/snippet}

{#snippet dockTitle(text, w)}
  <div class="dock-title">
    <span use:fit={w}>{text}</span><i class="grow"></i>{@render ic('float', 12)}{@render ic('close', 12)}
  </div>
{/snippet}

<div class="app">
  <header class="title">
    {@render ic('qgis', 21)}<span use:fit={128}>*Challenge — QGIS</span>
    <i class="progress"></i>
    <i class="grow"></i>
    <svg class="win" width="136" height="16" viewBox="0 0 136 16" fill="none" stroke="#111">
      <path d="M4 8.500h11M62.500 5.500h8v8h-8zM64.500 5.500v-2h8v8h-2M121 2.500l11 11M132 2.500l-11 11" />
    </svg>
  </header>
  <nav class="menu">
    {#each menus as [a, u, b, w]}
      <span class="entry" style:width="{w}px"><span use:fit={w}>{a}<u>{u}</u>{b}</span></span>
    {/each}
  </nav>
  {#each bars as bar}
    <div class="toolbar">
      {#each bar as item}
        {#if item === '|'}<i class="grip"></i>
        {:else if item === '/'}<i class="sep"></i>
        {:else}
          <span class="tool" class:pressed={item.endsWith('+')}>{@render ic(item.replace(/(\+|,v)$/, ''), 24)}</span>
          {#if item.endsWith(',v')}<i class="drop"></i>{/if}
        {/if}
      {/each}
    </div>
  {/each}

  <main>
    <aside class="left">
      <section class="browser">
        {@render dockTitle('Browser', 52)}
        <div class="small-tools">
          {#each ['add', 'refresh', 'funnel', 'collapse', 'info'] as n}<span>{@render ic(n, 16)}</span>{/each}
        </div>
        <div class="frame tree">
          <div class="rows">
            {#each browser as [icon, name, w, more]}
              <div class="row"><i class="twist" class:more></i>{@render ic(icon, 19)}<span use:fit={w}>{name}</span></div>
            {/each}
          </div>
          <div class="vscroll"><i class="up"></i><b></b><i class="down"></i></div>
        </div>
      </section>
      <i class="hsplit"></i>
      <section class="layers">
        {@render dockTitle('Layers', 40)}
        <div class="small-tools">
          {#each ['broom', 'group', 'eye', 'funnel', 'expr'] as n}<span>{@render ic(n, 16)}</span>{/each}
          <i class="drop"></i>
          {#each ['expand', 'collapse', 'remove'] as n}<span>{@render ic(n, 16)}</span>{/each}
        </div>
        <div class="frame layer-list">
          {#each layers as l}
            <div class="lrow {l.cls}">
              <i class="twist" class:open={l.open}></i>
              <svg class="check" width="17" height="17" viewBox="0 0 17 17"><rect x=".5" y=".5" width="16" height="16" fill="#fff" stroke="#b8b8b8" /><path d="M4 8.500l3 4.500 5.500-9.500" fill="none" stroke="#000" stroke-width="2.200" /></svg>
              {@render ic(l.icon, 17)}<span use:fit={l.w}>{l.name}</span>
            </div>
          {/each}
          <div class="lrow legend">{@render ic('black', 17)}<span use:fit={56}>-11851.9</span></div>
          <div class="lrow legend">{@render ic('blank', 17)}<span use:fit={50}>18820.2</span></div>
        </div>
      </section>
      <i class="hsplit"></i>
      <section class="stats">
        {@render dockTitle('Statistics', 57)}
        <div class="combo tahoma">{@render ic('points', 17)}<span use:fit={53}>Ref_Final</span><i class="grow"></i><i class="tri"></i></div>
        <div class="line">
          <div class="edit-combo"><span class="arrow-box"><i class="tri"></i></span></div>
          <div class="button">{@render ic('epsilon', 19)}</div>
        </div>
        <div class="frame table">
          <div class="head"><span><b use:fit={52}>Statistic</b></span><span><b use:fit={36}>Value</b></span></div>
          <div class="body"></div>
          <div class="hscroll"><i class="lf"></i><b></b><em></em><i class="rt"></i></div>
        </div>
        <div class="selonly tahoma">
          <i class="box"></i><span use:fit={127}>Selected features only</span>
          <span class="cp">{@render ic('copy', 18)}</span><span class="rf">{@render ic('refresh', 19)}</span>
          <div class="dots">...<i class="tri"></i></div>
        </div>
      </section>
    </aside>
    <i class="vsplit first"></i>
    <div class="map">
      <svg width="783" height="824" viewBox="257 172 783 824">
        <g class="pt">{#each under as [x, y]}<circle cx={x} cy={y} r="4.600" />{/each}</g>
        <path d="M522 408L523 431" fill="none" stroke="#232323" stroke-width="1.300" />
        <path d="M523 430L760.500 432.500 759.500 677.500 752 683 742 684 718 679.500 687 670.500 653 645 633 622 600 602.500 553 584.500H524.500z" fill="#8d5a99" stroke="#232323" stroke-width="1.200" />
        <g class="pt">{#each over as [x, y]}<circle cx={x} cy={y} r="4.600" />{/each}</g>
      </svg>
    </div>
    <i class="vsplit"></i>
    <aside class="right">
      {@render dockTitle('Processing Toolbox', 128)}
      <div class="small-tools">
        {#each ['models', 'scripts', 'history', 'results', '/', 'inplace', '/', 'wrench'] as n}
          {#if n === '/'}<i class="sep"></i>{:else}<span>{@render ic(n, 17)}</span>{/if}
        {/each}
      </div>
      <div class="search">{@render ic('search', 14)}<span use:fit={30}>differ</span><i class="grow"></i>{@render ic('clear', 14)}</div>
      <div class="frame algs">
        {#each algs as [depth, icon, name, w, open, cls]}
          <div class="arow {cls}">
            <i class="indent" style:width="{depth * 25}px"></i>
            <i class="twist" class:open></i>
            {#if icon}{@render ic(icon, 19)}{/if}
            <span use:fit={w}>{name}</span>
          </div>
        {/each}
      </div>
    </aside>
  </main>

  <footer class="status tahoma">
    <div class="locate">{@render ic('search', 13)}<span use:fit={130}>Type to locate (Ctrl+K)</span></div>
    <i class="grow"></i>
    <span class="s1" use:fit={62}>Coordinate</span>
    <div class="field coord"><span use:fit={79}>149.14,-54.33</span></div>
    <span class="s2">{@render ic('mouse', 20)}</span>
    <span class="s3" use:fit={31}>Scale</span>
    <div class="field scale"><span use:fit={63}>.:16925936</span><span class="arrow-box"><i class="tri"></i></span></div>
    <span class="s4">{@render ic('lock', 20)}</span>
    <span class="s5" use:fit={52}>Magnifier</span>
    <div class="field mag"><span use:fit={32}>100%</span><span class="spin"><i></i><i></i></span></div>
    <span class="s6" use:fit={47}>Rotation</span>
    <div class="field rot"><span use:fit={28}>0.0 °</span><span class="spin"><i></i><i></i></span></div>
    <svg class="check" width="17" height="17" viewBox="0 0 17 17"><rect x=".5" y=".5" width="16" height="16" fill="#fff" stroke="#b8b8b8" /><path d="M4 8.500l3 4.500 5.500-9.500" fill="none" stroke="#000" stroke-width="2.200" /></svg>
    <span class="s7" use:fit={41}>Render</span>
    <span class="s8">{@render ic('crs', 19)}</span>
    <span class="s9" use:fit={63}>EPSG:4326</span>
    <span class="s10">{@render ic('bubble', 21)}</span>
    <span class="s11">{@render ic('puzzle', 23)}</span>
  </footer>
</div>

<style>
  :global(body) { background: #f0f0f0; overflow: hidden; }
  .app { width: 1920px; height: 1030px; display: flex; flex-direction: column; overflow: hidden; background: #f0f0f0; color: #000; font: 14.5px/20px 'Open Sans', 'Noto Sans', sans-serif; }
  .app :global(*) { box-sizing: border-box; }
  span { white-space: nowrap; }
  i { font-style: normal; }
  .ic { flex: none; display: block; overflow: visible; }
  .grow { flex: 1; }
  .tahoma { font: 12.5px/16px 'DejaVu Sans Condensed', 'DejaVu Sans', sans-serif; }

  .title { height: 29px; flex: none; background: #fff; display: flex; align-items: center; padding-left: 1px; position: relative; }
  .title span { margin-left: 5px; }
  .progress { position: absolute; left: 809px; top: 0; width: 301px; height: 1px; background: linear-gradient(90deg, #0078d7 60px, #e2e2e2 60px); }
  .win { margin-right: 22px; }
  .menu { height: 24px; flex: none; display: flex; gap: 15px; padding: 3px 0 0 11px; }
  .entry { flex: none; }
  .menu u { text-underline-offset: 2px; text-decoration-thickness: 1px; }

  .toolbar { height: 39px; flex: none; display: flex; align-items: center; border-top: 1px solid #b8b8b8; background: linear-gradient(#fafafa, #ececec); }
  .toolbar:nth-of-type(3) { height: 38px; }
  .menu + .toolbar { border-top-color: #d4d4d4; }
  .grip { width: 18px; height: 19px; flex: none; background: radial-gradient(circle, #a8a8a8 .7px, transparent .9px) 9px 0 / 4px 3px repeat; background-clip: content-box; padding: 0 4px 0 9px; }
  .grip:first-child { width: 14.5px; padding: 0 3px 0 5px; background-position: 5px 0; }
  .sep { width: 8px; height: 20px; flex: none; background: linear-gradient(90deg, transparent 3px, #d0d0d0 3px, #d0d0d0 4px, #fff 4px, #fff 5px, transparent 5px); }
  .tool { width: 33px; height: 32px; flex: none; display: grid; place-items: center; }
  .tool.pressed { width: 32px; margin-right: 1px; background: #dcdcdc; border: 1px solid #b0b0b0; border-radius: 2px; }
  .drop { width: 15px; height: 5px; flex: none; background: #555; clip-path: polygon(2px 0, 12px 0, 7px 5px); }

  main { flex: 1; min-height: 0; display: flex; border-top: 1px solid #b8b8b8; }
  .left { width: 249px; flex: none; display: flex; flex-direction: column; }
  .frame { border: 1px solid #b5b5b5; background: #fff; }
  .dock-title { height: 22px; flex: none; display: flex; align-items: center; gap: 2px; padding: 0 2px 0 4px; }
  .dock-title > span { padding-top: 1px; }
  .small-tools { height: 26px; flex: none; display: flex; align-items: center; padding-left: 3px; margin-bottom: 3px; }
  .small-tools span { width: 25px; display: grid; place-items: center; flex: none; }
  .small-tools .drop { margin-left: 1px; }
  .browser { height: 294px; flex: none; }
  .tree { height: 243px; display: flex; }
  .rows { flex: 1; overflow: hidden; }
  .row { height: 22px; display: flex; align-items: center; }
  .row > span { margin-left: 6px; padding-top: 1px; }
  .twist { width: 29px; height: 12px; flex: none; }
  .twist.more { background: #555; clip-path: polygon(10px 1px, 15px 6px, 10px 11px); }
  .twist.open { background: #555; clip-path: polygon(8px 3px, 18px 3px, 13px 8px); }
  .vscroll { width: 17px; flex: none; border-left: 1px solid #c4c4c4; display: flex; flex-direction: column; background: #e4e4e4; }
  .vscroll b { height: 96px; flex: none; background: linear-gradient(90deg, #fcfcfc, #f2f2f2); border: solid #b8b8b8; border-width: 1px 0; }
  .vscroll .up { height: 16px; flex: none; border-bottom: 6px solid #f6f6f6; background: conic-gradient(from 135deg at 50% 5px, #555 90deg, #f6f6f6 0) no-repeat; }
  .vscroll .down { height: 17px; margin-top: auto; border-top: 6px solid #f6f6f6; background: conic-gradient(from -45deg at 50% 5px, #555 90deg, #f6f6f6 0); }
  .hsplit { height: 6px; flex: none; width: 18px; margin: 0 auto; background: radial-gradient(circle, #aaa .7px, transparent .9px) 0 2px / 3px 3px repeat-x; }
  .layers { height: 240px; flex: none; }
  .layer-list { height: 189px; }
  .lrow { height: 22px; display: flex; align-items: center; }
  .lrow .twist { width: 28px; }
  .lrow .check { margin-right: 6px; }
  .lrow > span { margin-left: 6px; font-weight: 700; }
  .lrow.sub .check { margin-right: 8px; }
  .lrow.sub > span { margin-left: 7px; }
  .lrow.current { background: #f0f0f0; }
  .lrow.current > span { text-decoration: underline; text-underline-offset: 2px; }
  .lrow.legend { padding-left: 53px; }
  .lrow.legend > span { font-weight: 400; margin-left: 6px; }
  .stats { flex: 1; display: flex; flex-direction: column; }
  .stats > :global(.dock-title) { height: 20px; }
  .combo, .button, .dots { border: 1px solid #b0b0b0; border-radius: 2px; background: linear-gradient(#fdfdfd, #efefef); }
  .combo { height: 28px; display: flex; align-items: center; padding: 0 10px 0 6px; }
  .combo span { margin-left: 5px; }
  .tri { width: 10px; height: 5px; background: #555; clip-path: polygon(0 0, 100% 0, 50% 100%); flex: none; display: block; }
  .line { display: flex; justify-content: space-between; margin-top: 3px; }
  .edit-combo { width: 214px; height: 27px; border: 1px solid #b0b0b0; border-radius: 2px; background: #fff; display: flex; justify-content: flex-end; }
  .arrow-box { width: 25px; background: linear-gradient(#fcfcfc, #f0f0f0); display: grid; place-items: center; }
  .edit-combo .arrow-box { padding-right: 4px; }
  .button { width: 28px; height: 27px; display: grid; place-items: center; }
  .table { height: 171px; margin-top: 3px; display: flex; flex-direction: column; }
  .head { display: flex; height: 24px; border-bottom: 1px solid #b8b8b8; background: linear-gradient(#fcfcfc, #efefef); }
  .head span { width: 124px; display: grid; place-items: center; }
  .head span + span { border-left: 1px solid #c4c4c4; flex: 1; padding-left: 2px; }
  .head b { font-weight: 400; }
  .body { flex: 1; }
  .hscroll { height: 17px; border-top: 1px solid #b8b8b8; display: flex; background: #e4e4e4; }
  .hscroll b { width: 108px; background: #f8f8f8; border: solid #b8b8b8; border-width: 0 1px; }
  .hscroll em { flex: 1; }
  .hscroll i { width: 16px; position: relative; background: #f8f8f8; }
  .hscroll i::after { content: ''; position: absolute; left: 5px; top: 3px; width: 5px; height: 10px; background: #555; }
  .hscroll .lf::after { clip-path: polygon(100% 0, 100% 100%, 0 50%); }
  .hscroll .rt { width: 17px; border-left: 1px solid #b8b8b8; }
  .hscroll .rt::after { clip-path: polygon(0 0, 100% 50%, 0 100%); }
  .selonly { display: flex; align-items: center; margin-top: 5px; height: 23px; }
  .box { width: 17px; height: 17px; border: 1px solid #c0c0c0; background: #fff; margin-right: 6px; }
  .cp { margin-left: 15px; }
  .rf { margin-left: 13px; }
  .dots { margin-left: auto; width: 27px; height: 23px; display: flex; align-items: center; padding-left: 7px; font-weight: 700; }
  .dots .tri { margin: 8px 0 0 -2px; width: 9px; }

  .vsplit { width: 7px; flex: none; background: radial-gradient(circle, #aaa .7px, transparent .9px) 3px 0 / 3px 3px repeat-y; background-clip: content-box; padding: 407px 0 404px; }
  .map { width: 785px; height: 827px; margin-top: 1px; flex: none; border: 1px solid #b5b5b5; background: #fff; }
  .map svg { display: block; }
  .pt { fill: #62f3cf; stroke: #232f2c; stroke-width: 1.1; }
  .right { flex: 1; display: flex; flex-direction: column; }
  .right .small-tools .sep { width: 8px; height: 12px; }
  .search { height: 24px; display: flex; align-items: center; border: 1px solid #b0b0b0; border-radius: 2px; background: #fff; padding: 0 8px 0 7px; font-size: 13.5px; flex: none; }
  .search span { margin-left: 7px; }
  .algs { flex: 1; }
  .arow { height: 22px; display: flex; align-items: center; }
  .arow > span { margin-left: 6px; padding-top: 1px; }
  .arow.short { height: 20px; }
  .arow.short > span { margin-left: 0; }
  .arow.off { color: #999; }
  .arow.selected { background: linear-gradient(90deg, #0078d7 77px, transparent 77px), linear-gradient(#1a88e0, #0a7bd8); color: #fff; }

  .status { height: 32px; flex: none; display: flex; align-items: center; padding: 2px 3px 0 4px; }
  .locate { width: 232px; height: 24px; border: 1px solid #b0b0b0; border-radius: 2px; background: #fff; display: flex; align-items: center; padding-left: 8px; color: #777; }
  .locate span { margin-left: 7px; }
  .field { height: 24px; border: 1px solid #b0b0b0; border-radius: 3px; background: #fff; display: flex; align-items: center; justify-content: space-between; flex: none; }
  .coord { width: 95px; padding-left: 7px; margin-left: 3px; }
  .s2 { margin-left: 3px; }
  .s3 { margin-left: 14px; }
  .scale { width: 93px; margin-left: 3px; padding-left: 1px; }
  .scale .arrow-box { height: 22px; width: 25px; padding-right: 6px; }
  .s4 { margin-left: 10px; }
  .s5 { margin-left: 7px; }
  .mag { width: 93px; margin-left: 4px; padding-left: 5px; }
  .s6 { margin-left: 9px; }
  .rot { width: 89px; margin: 0 6px 0 9px; padding-left: 5px; }
  .spin { width: 17px; height: 22px; border-left: 1px solid #c0c0c0; display: flex; flex-direction: column; align-items: center; justify-content: center; gap: 4px; background: linear-gradient(#fcfcfc, #f2f2f2); }
  .spin i { width: 10px; height: 5px; background: #555; clip-path: polygon(0 0, 100% 0, 50% 100%); }
  .spin i:first-child { clip-path: polygon(50% 0, 100% 100%, 0 100%); }
  .s7 { margin-left: 6px; }
  .s8 { margin-left: 17px; }
  .s9 { margin-left: 5px; }
  .s10 { margin-left: 21px; }
  .s11 { margin-left: 10px; }
</style>
